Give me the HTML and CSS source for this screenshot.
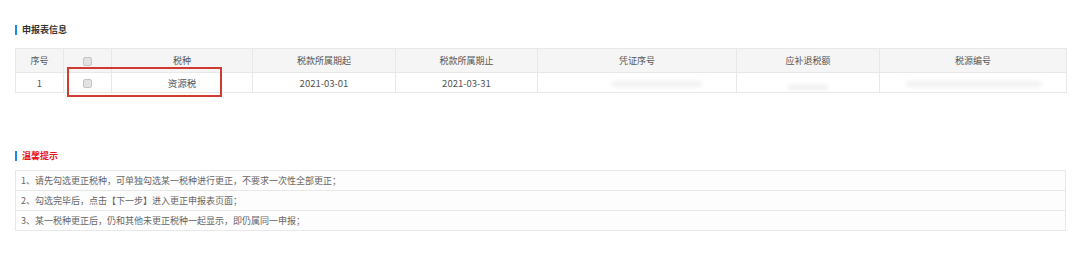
FILE: index.html
```html
<!DOCTYPE html>
<html lang="zh-CN">
<head>
    <meta charset="UTF-8">
    <title>申报表信息</title>
    <link rel="stylesheet" href="styles.css">
</head>
<body>
    <div class="page">
        <div class="section-title">申报表信息</div>

        <div class="table-wrap">
            <table class="grid">
                <colgroup>
                    <col style="width:48px">
                    <col style="width:48px">
                    <col style="width:141px">
                    <col style="width:143px">
                    <col style="width:142px">
                    <col style="width:199px">
                    <col style="width:143px">
                    <col style="width:187px">
                </colgroup>
                <thead>
                    <tr>
                        <th>序号</th>
                        <th><span class="check"></span></th>
                        <th>税种</th>
                        <th>税款所属期起</th>
                        <th>税款所属期止</th>
                        <th>凭证序号</th>
                        <th>应补退税额</th>
                        <th>税源编号</th>
                    </tr>
                </thead>
                <tbody>
                    <tr>
                        <td>1</td>
                        <td><span class="check"></span></td>
                        <td>资源税</td>
                        <td>2021-03-01</td>
                        <td>2021-03-31</td>
                        <td><span class="smudge smudge-wide"></span></td>
                        <td><span class="smudge smudge-short"></span></td>
                        <td><span class="smudge smudge-long"></span></td>
                    </tr>
                </tbody>
            </table>
            <div class="mark"></div>
        </div>

        <div class="section-title warn">温馨提示</div>

        <div class="tips">
            <div class="tip">1、请先勾选更正税种，可单独勾选某一税种进行更正，不要求一次性全部更正；</div>
            <div class="tip">2、勾选完毕后，点击【下一步】进入更正申报表页面；</div>
            <div class="tip">3、某一税种更正后，仍和其他未更正税种一起显示，即仍属同一申报；</div>
        </div>
    </div>
</body>
</html>
```

FILE: styles.css
```css
body {
    margin: 0;
    background-color: white;
    font-family: "Noto Sans CJK SC", "Noto Sans", sans-serif;
    font-size: 9px;
    color: #555;
}
.page {
    width: 1051px;
    padding: 25px 0 0 15px;
}
.section-title {
    border-left: 2px solid #1e88e5;
    padding-left: 5px;
    line-height: 10px;
    font-weight: bold;
    color: #333;
    margin-bottom: 13px;
}
.section-title.warn {
    color: #e8161b;
    margin-top: 58px;
    margin-bottom: 9px;
}
.table-wrap {
    position: relative;
}
.grid {
    width: 1051px;
    border-collapse: collapse;
    table-layout: fixed;
}
.grid th,
.grid td {
    border: 1px solid #e8e8e8;
    text-align: center;
    font-weight: normal;
    padding: 0;
    color: #555;
}
.grid th {
    height: 23px;
    background-color: #f5f5f5;
}
.grid td {
    height: 19px;
    font-size: 9.5px;
}
.check {
    display: inline-block;
    width: 7px;
    height: 7px;
    border: 1px solid #c4c4c4;
    border-radius: 2px;
    background-color: #e2e2e2;
    vertical-align: middle;
}
.smudge {
    display: inline-block;
    height: 4px;
    background-color: #ececec;
    filter: blur(2px);
    vertical-align: middle;
}
.smudge-wide {
    width: 90px;
    margin-left: 40px;
}
.smudge-short {
    width: 40px;
    margin-top: 6px;
}
.smudge-long {
    width: 135px;
}
.mark {
    position: absolute;
    left: 52px;
    top: 19px;
    width: 151px;
    height: 26px;
    border: 2px solid #cf3a32;
}
.tips {
    border: 1px solid #e8e8e8;
    background-color: #fdfdfd;
}
.tip {
    height: 19px;
    line-height: 19px;
    padding-left: 5px;
    border-top: 1px solid #e8e8e8;
    color: #666;
}
.tip:first-child {
    border-top: none;
}
```
